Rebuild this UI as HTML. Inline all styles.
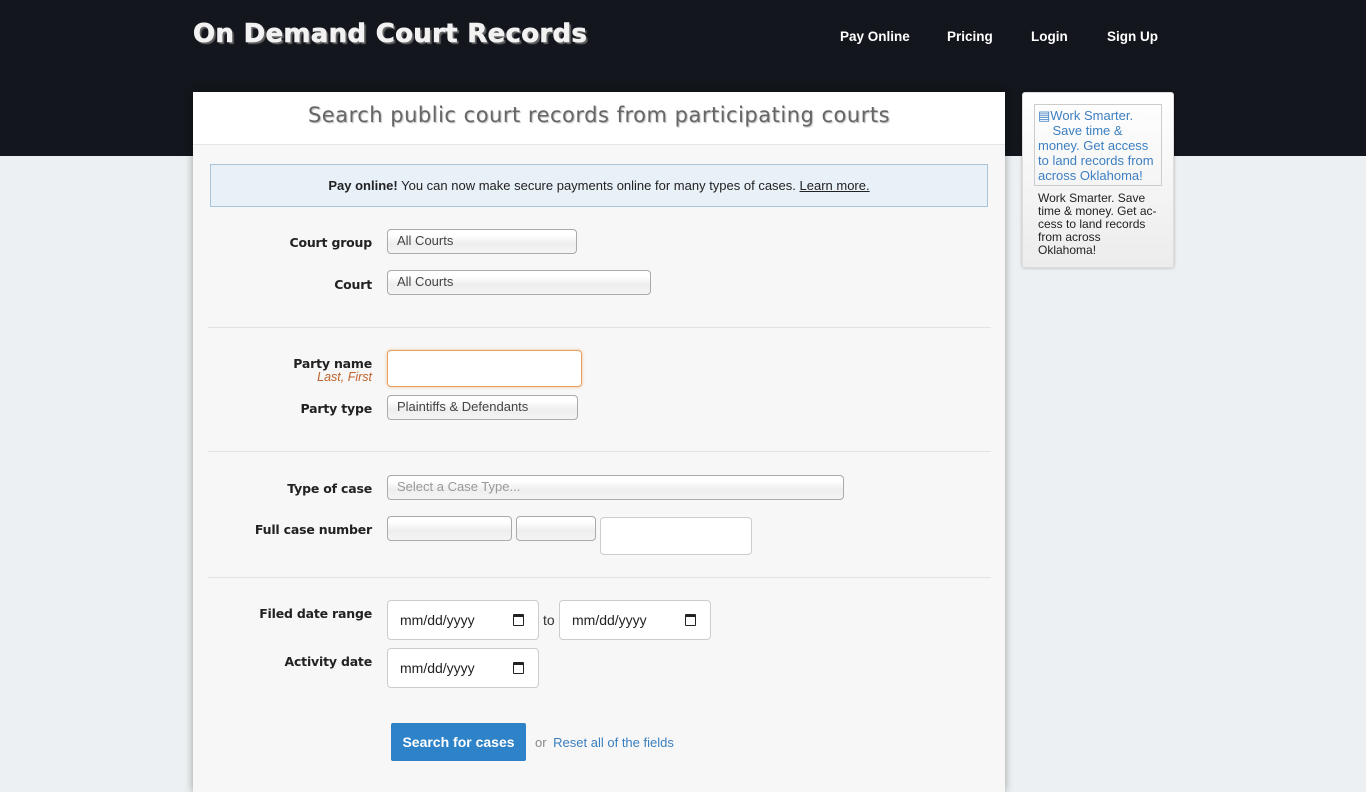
<!DOCTYPE html>
<html><head><meta charset="utf-8"><style>
*{box-sizing:border-box;margin:0;padding:0}
body{width:1366px;height:768px;overflow:hidden;background:#edf0f2;font-family:"Liberation Sans",Arial,sans-serif;font-size:13px;color:#222;position:relative}
.hdr{position:absolute;left:0;top:0;width:1366px;height:156px;background:#13161c}
.logo{position:absolute;left:193px;top:19px;font-family:"DejaVu Sans",Verdana,sans-serif;font-size:26px;font-weight:900;color:#f2f2f2;text-shadow:2px 2px 1px #666;letter-spacing:0.3px;-webkit-text-stroke:0.6px #f2f2f2}
.nav a{position:absolute;top:29px;color:#fff;font-weight:bold;font-size:13.5px;text-decoration:none}
.main{position:absolute;left:193px;top:92px;width:812px;height:700px;background:#f7f7f7;box-shadow:0 0 8px rgba(0,0,0,.35)}
.title{height:53px;background:#fff;border-bottom:1px solid #e6e6e6;text-align:center;font-family:"DejaVu Sans",Verdana,sans-serif;font-size:21px;letter-spacing:0.5px;color:#666;padding-top:11px;text-shadow:1px 1px 1px #bbb}
.note{position:absolute;left:17px;top:72px;width:778px;height:43px;background:#e8f0f8;border:1px solid #a9c3d9;text-align:center;line-height:41px;font-size:13px;color:#222}
.note a{color:#222}
.lbl{position:absolute;right:633px;font-family:"DejaVu Sans",Verdana,sans-serif;font-weight:bold;font-size:12.5px;color:#222;text-align:right;white-space:nowrap;letter-spacing:-0.2px}
.sel{position:absolute;height:25px;border:1px solid #aaa;border-radius:4px;background:linear-gradient(#fff 20%,#eee 60%,#f4f4f4);padding-left:9px;line-height:22px;font-size:13px;color:#444}
.hr{position:absolute;left:15px;width:783px;border-top:1px solid #e2e2e2}
.inp{position:absolute;background:#fff;border:1px solid #ccc;border-radius:4px}
.date{position:absolute;width:152px;height:40px;background:#fff;border:1px solid #ccc;border-radius:4px;font-size:14px;color:#222;padding:11px 0 0 12px}
.date i{position:absolute;right:14px;top:13px;width:11px;height:12px;border:1.5px solid #222;border-top-width:3px;border-radius:1px}
.btn{position:absolute;left:198px;top:631px;width:135px;height:38px;background:#2e82c7;color:#fff;font-weight:bold;font-size:14px;text-align:center;line-height:38px;border-radius:2px}
.side{position:absolute;left:1022px;top:92px;width:152px;height:176px;background:linear-gradient(#fff,#ececec);border:1px solid #ddd;border-radius:3px;box-shadow:0 0 3px rgba(0,0,0,.25)}
.img{position:absolute;left:11px;top:11px;width:128px;height:82px;border:1px solid #ccc;color:#3d7fc1;font-size:13px;line-height:15px;padding:3px 3px}
.stxt{position:absolute;left:15px;top:99px;width:130px;font-size:12px;line-height:13px;color:#222;white-space:nowrap}
</style></head><body>
<div class="hdr"></div>
<div class="logo">On Demand Court Records</div>
<div class="nav"><a style="left:840px">Pay Online</a><a style="left:947px">Pricing</a><a style="left:1031px">Login</a><a style="left:1107px">Sign Up</a></div>
<div class="main">
<div class="title">Search public court records from participating courts</div>
<div class="note"><b>Pay online!</b> You can now make secure payments online for many types of cases. <a href="#">Learn more.</a></div>
<div class="lbl" style="top:143px">Court group</div>
<div class="sel" style="left:194px;top:137px;width:190px">All Courts</div>
<div class="lbl" style="top:185px">Court</div>
<div class="sel" style="left:194px;top:178px;width:264px">All Courts</div>
<div class="hr" style="top:235px"></div>
<div class="lbl" style="top:264px">Party name</div>
<div style="position:absolute;right:633px;top:278px;font-style:italic;color:#c0622b;font-size:12.5px">Last, First</div>
<div class="inp" style="left:194px;top:258px;width:195px;height:37px;border:1px solid #e8a060;box-shadow:0 0 3px #f0c090"></div>
<div class="lbl" style="top:309px">Party type</div>
<div class="sel" style="left:194px;top:303px;width:191px">Plaintiffs &amp; Defendants</div>
<div class="hr" style="top:359px"></div>
<div class="lbl" style="top:389px">Type of case</div>
<div class="sel" style="left:194px;top:383px;width:457px;color:#999">Select a Case Type...</div>
<div class="lbl" style="top:430px">Full case number</div>
<div class="sel" style="left:194px;top:424px;width:125px"></div>
<div class="sel" style="left:323px;top:424px;width:80px"></div>
<div class="inp" style="left:407px;top:425px;width:152px;height:38px"></div>
<div class="hr" style="top:485px"></div>
<div class="lbl" style="top:514px">Filed date range</div>
<div class="date" style="left:194px;top:508px">mm/dd/yyyy<i></i></div>
<div style="position:absolute;left:350px;top:520px;font-size:14px;color:#333">to</div>
<div class="date" style="left:366px;top:508px">mm/dd/yyyy<i></i></div>
<div class="lbl" style="top:562px">Activity date</div>
<div class="date" style="left:194px;top:556px">mm/dd/yyyy<i></i></div>
<div class="btn">Search for cases</div>
<div style="position:absolute;left:342px;top:643px;font-size:13px;color:#888">or <span style="color:#3a7fc0;margin-left:3px">Reset all of the fields</span></div>
</div>
<div class="side">
<div class="img">&#9636;Work Smarter.<br>&nbsp;&nbsp;&nbsp;&nbsp;Save time &amp; money. Get access to land records from across Oklahoma!</div>
<div class="stxt">Work Smarter. Save<br>time &amp; money. Get ac-<br>cess to land records<br>from across<br>Oklahoma!</div>
</div>
</body></html>
